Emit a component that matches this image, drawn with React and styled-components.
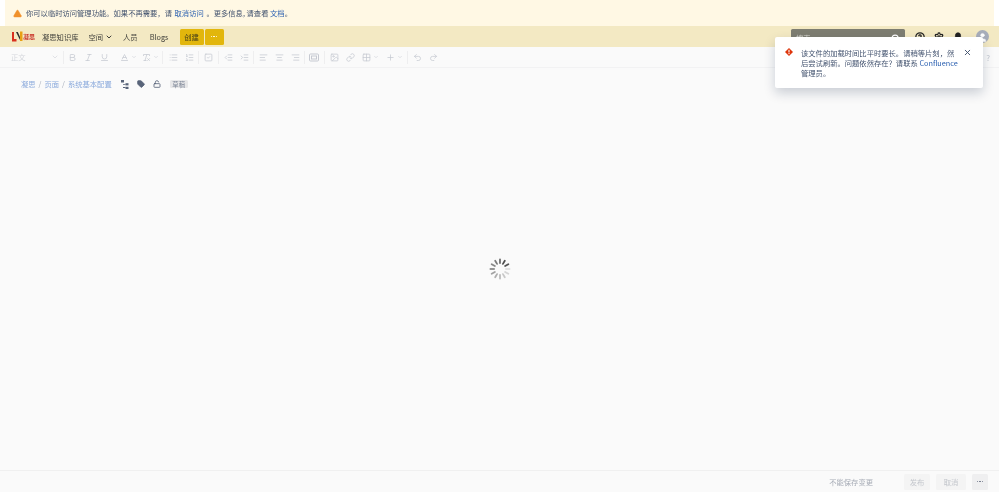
import React from 'react'
import styled, { createGlobalStyle } from 'styled-components'
import {
  AlertTriangle, Bold, Italic, Underline, ChevronDown, List, ListOrdered, SquareCheck,
  IndentDecrease, IndentIncrease, AlignLeft, AlignCenter, AlignRight, Image, Baseline,
  RemoveFormatting, Link as LinkIcon, Grid2x2, Plus, Undo2, Redo2, Search, CircleHelp,
  Settings, Bell, X, Tag, LockOpen, User
} from 'lucide-react'

const FONT = '"Noto Sans CJK SC", "Liberation Sans", sans-serif'

const GlobalStyle = createGlobalStyle`
  html, body { margin: 0; padding: 0; height: 100%; background: #fff; }
  #root { height: 100%; }
  * { box-sizing: border-box; }
`

const Page = styled.div`
  position: relative;
  display: flex;
  flex-direction: column;
  height: 492px;
  overflow: hidden;
  font-family: ${FONT};
  font-size: 7.3px;
  color: #42526e;
  background: #fafafa;
  filter: blur(0.3px);
`

const Banner = styled.div`
  display: flex;
  align-items: center;
  flex: none;
  height: 26px;
  padding-left: 8px;
  margin: 0 5px;
  background: #fff8e4;
  color: #42526e;
  box-shadow: -5px 0 0 #fff, 5px 0 0 #fff;

  svg { margin-right: 4px; }
`

const Link = styled.a`
  color: #2a5fb0;
  margin: ${props => props.$spaced ? '0 1px' : '0'};
`

const Nav = styled.div`
  display: flex;
  align-items: center;
  flex: none;
  height: 21px;
  padding: 0 10px 0 12px;
  background: #f3e9c3;
  color: #3f3f3a;
`

const Logo = styled.div`
  display: flex;
  align-items: center;
  width: 30px;
  color: #c9342a;
  font-size: 6px;
  font-weight: 700;
  gap: 0;
`

const NavItem = styled.span`
  display: flex;
  align-items: center;
  gap: 2px;
  margin-right: ${props => props.$gap}px;
`

const NavButton = styled.div`
  display: flex;
  align-items: center;
  justify-content: center;
  height: 16px;
  width: ${props => props.$w}px;
  margin-right: 1px;
  background: #e2b60c;
  border-radius: 1.5px;
  color: #3f3a1a;
  font-size: 7.3px;
`

const Dots = styled.span`
  display: flex;
  gap: 1px;

  i {
    width: 1.5px;
    height: 1.5px;
    border-radius: 50%;
    background: ${props => props.$color};
  }
`

const NavRight = styled.div`
  display: flex;
  align-items: center;
  margin-left: auto;
`

const SearchBox = styled.div`
  display: flex;
  align-items: center;
  justify-content: space-between;
  width: 114px;
  height: 18px;
  margin-top: 3px;
  padding: 0 5px;
  background: #7d7d71;
  border-radius: 1.5px 1.5px 0 0;
  color: #d8d8d0;
  margin-right: 9px;
`

const NavIcon = styled.span`
  display: flex;
  justify-content: center;
  width: 12px;
  margin-right: ${props => props.$gap}px;
  color: #222;
`

const Avatar = styled.span`
  display: flex;
  align-items: flex-end;
  justify-content: center;
  width: 13px;
  height: 13px;
  border-radius: 50%;
  background: #a7adba;
  overflow: hidden;
  color: #fff;
`

const Toolbar = styled.div`
  display: flex;
  align-items: center;
  flex: none;
  height: 21px;
  padding: 0 9px 0 11px;
  background: #fafafa;
  border-bottom: 1px solid #f2f2f3;
  color: #c6c9d1;
`

const StyleSelect = styled.div`
  display: flex;
  align-items: center;
  justify-content: space-between;
  width: 52px;
  padding-right: 4px;
  color: #d5d7dc;
`

const Divider = styled.span`
  flex: none;
  width: 1px;
  height: 13px;
  margin: 0 ${props => props.$gap ?? 1.5}px;
  background: #eeeeef;
`

const ToolButton = styled.span`
  display: flex;
  align-items: center;
  justify-content: ${props => props.$wide ? 'flex-start' : 'center'};
  flex: none;
  width: ${props => props.$wide ? props.$wide : 16}px;
  padding-left: ${props => props.$wide ? 4 : 0}px;
  gap: 2px;
`

const Spacer = styled.span`
  flex: none;
  width: ${props => props.$w}px;
`

const HelpMark = styled.span`
  margin-left: auto;
  color: #c3c7d0;
  font-size: 8px;
`

const Content = styled.div`
  flex: 1;
  display: flex;
  flex-direction: column;
  background: #fafafa;
`

const Breadcrumbs = styled.div`
  display: flex;
  align-items: center;
  height: 12px;
  margin: 10px 0 0 21px;
  color: #8aa9dc;
`

const Sep = styled.span`
  margin: 0 3px;
  color: #a9b0bd;
`

const CrumbIcon = styled.span`
  display: flex;
  justify-content: center;
  width: 16px;
  color: #596479;
  margin-left: ${props => props.$first ? 5 : 0}px;
`

const Lozenge = styled.span`
  display: flex;
  align-items: center;
  justify-content: center;
  width: 18px;
  height: 8px;
  margin-left: 5px;
  background: #e7e7e8;
  border-radius: 1.5px;
  color: #7c8596;
  font-size: 6.4px;
`

const SpinnerArea = styled.div`
  flex: 1;
  display: flex;
  align-items: center;
  justify-content: center;
  padding-bottom: 23px;
`

const Footer = styled.div`
  display: flex;
  align-items: center;
  flex: none;
  height: 22px;
  padding: 0 11px 0 0;
  justify-content: flex-end;
  background: #fafafa;
  border-top: 1px solid #f0f0f0;
  color: #a8adb7;
`

const Status = styled.span`
  margin-right: 31px;
`

const FooterButton = styled.span`
  display: flex;
  align-items: center;
  justify-content: center;
  width: ${props => props.$w}px;
  height: 16px;
  margin-left: ${props => props.$gap}px;
  background: ${props => props.$dark ? '#efeff0' : '#f4f4f4'};
  border-radius: 1.5px;
  color: #c3c6cc;
`

const Flag = styled.div`
  position: absolute;
  top: 37px;
  left: 775px;
  display: flex;
  width: 208px;
  height: 51px;
  padding: 10px 10px 0 10px;
  background: #fff;
  border-radius: 2px;
  box-shadow: 0 5px 12px rgba(9, 30, 66, 0.2);
  line-height: 10.3px;
  color: #42526e;
`

const FlagIcon = styled.span`
  flex: none;
  width: 16px;
`

const FlagText = styled.div`
  flex: 1;
  padding-top: 0.5px;
`

const FlagClose = styled.span`
  flex: none;
  width: 10px;
  margin: 1px 0 0 5px;
  color: #42526e;
`

const tools = {
  size: 9,
  strokeWidth: 2
}

function Spinner() {
  const bars = Array.from({ length: 12 }, (_, i) => i)
  return (
    <svg width="22" height="22" viewBox="-11 -11 22 22">
      {bars.map(i => (
        <rect
          key={i}
          x="-0.9"
          y="-10.5"
          width="1.8"
          height="5.5"
          rx="0.9"
          fill="#333"
          opacity={0.12 + ((i + 9) % 12) * 0.065 + (((i + 9) % 12) === 10 ? 0.1 : 0)}
          transform={`rotate(${i * 30})`}
        />
      ))}
    </svg>
  )
}

function LogoMark() {
  return (
    <svg width="11" height="11" viewBox="0 0 11 11">
      <path d="M0 1h2v7h2.5v2.5H0z" fill="#d9301f" />
      <path d="M8 0.5h2.5v9.5H8z" fill="#e8a013" />
      <path d="M4 1h1.8l2.2 5v3z" fill="#2b2b2b" />
    </svg>
  )
}

function FlagErrorIcon() {
  return (
    <svg width="8" height="8" viewBox="0 0 10 10" style={{ marginTop: 1 }}>
      <path d="M5 0l5 5-5 5-5-5z" fill="#de350b" />
      <rect x="4.3" y="2.2" width="1.4" height="3.4" fill="#fff" />
      <rect x="4.3" y="6.3" width="1.4" height="1.4" fill="#fff" />
    </svg>
  )
}

function LayoutIcon() {
  return (
    <svg width="10" height="9" viewBox="0 0 10 9" fill="none" stroke="currentColor" strokeWidth="1">
      <rect x="0.5" y="1" width="9" height="7" rx="1" />
      <rect x="2.5" y="3" width="5" height="3" />
    </svg>
  )
}

function TreeIcon() {
  return (
    <svg width="8" height="9" viewBox="0 0 8 9" fill="#596479">
      <rect x="0" y="0" width="3" height="2.5" />
      <rect x="4.5" y="3.2" width="3" height="2.2" />
      <rect x="4.5" y="6.8" width="3" height="2.2" />
      <path d="M1 2.5h1v5.5h2.5v-0.9H2V4.8h2.5V3.9H2V2.5z" />
    </svg>
  )
}

export default function App() {
  return (
    <Page>
      <GlobalStyle />
      <Banner>
        <AlertTriangle size={9} fill="#f0912b" color="#f0912b" strokeWidth={1.5} />
        你可以临时访问管理功能。如果不再需要，请
        <Link $spaced>&nbsp;取消访问&nbsp;</Link>
        。更多信息, 请查看&nbsp;
        <Link>文档</Link>。
      </Banner>

      <Nav>
        <Logo>
          <LogoMark />
          <span>凝思</span>
        </Logo>
        <NavItem $gap={10}>凝思知识库</NavItem>
        <NavItem $gap={10}>空间 <ChevronDown size={8} strokeWidth={3} /></NavItem>
        <NavItem $gap={12}>人员</NavItem>
        <NavItem $gap={11}>Blogs</NavItem>
        <NavButton $w={24}>创建</NavButton>
        <NavButton $w={19}><Dots $color="#fff"><i /><i /><i /></Dots></NavButton>
        <NavRight>
          <SearchBox>
            搜索
            <Search size={9} color="#fff" strokeWidth={3} />
          </SearchBox>
          <NavIcon $gap={7}><CircleHelp size={10} strokeWidth={3} /></NavIcon>
          <NavIcon $gap={7}><Settings size={10} strokeWidth={3} /></NavIcon>
          <NavIcon $gap={12}><Bell size={10} fill="#222" /></NavIcon>
          <Avatar><User size={11} fill="#fff" strokeWidth={1} /></Avatar>
        </NavRight>
      </Nav>

      <Toolbar>
        <StyleSelect>正文 <ChevronDown size={8} /></StyleSelect>
        <Divider $gap={0} />
        <ToolButton><Bold {...tools} /></ToolButton>
        <ToolButton><Italic {...tools} /></ToolButton>
        <ToolButton><Underline {...tools} /></ToolButton>
        <Spacer $w={3.5} />
        <ToolButton $wide={22}><Baseline size={9} /><ChevronDown size={6} /></ToolButton>
        <ToolButton $wide={22.5}><RemoveFormatting size={9} /><ChevronDown size={6} /></ToolButton>
        <Divider $gap={2} />
        <ToolButton><List {...tools} /></ToolButton>
        <ToolButton><ListOrdered {...tools} /></ToolButton>
        <Divider $gap={1} />
        <ToolButton><SquareCheck {...tools} /></ToolButton>
        <Divider />
        <ToolButton><IndentDecrease {...tools} /></ToolButton>
        <ToolButton><IndentIncrease {...tools} /></ToolButton>
        <Divider $gap={1} />
        <ToolButton><AlignLeft {...tools} /></ToolButton>
        <ToolButton><AlignCenter {...tools} /></ToolButton>
        <ToolButton><AlignRight {...tools} /></ToolButton>
        <Divider $gap={1} />
        <ToolButton><LayoutIcon /></ToolButton>
        <Divider />
        <ToolButton><Image {...tools} /></ToolButton>
        <ToolButton><LinkIcon {...tools} /></ToolButton>
        <ToolButton $wide={24}><Grid2x2 size={9} /><ChevronDown size={6} /></ToolButton>
        <ToolButton $wide={23}><Plus size={9} /><ChevronDown size={6} /></ToolButton>
        <Divider />
        <ToolButton><Undo2 {...tools} /></ToolButton>
        <ToolButton><Redo2 {...tools} /></ToolButton>
        <HelpMark>?</HelpMark>
      </Toolbar>

      <Content>
        <Breadcrumbs>
          凝思<Sep>/</Sep>页面<Sep>/</Sep>系统基本配置
          <CrumbIcon $first><TreeIcon /></CrumbIcon>
          <CrumbIcon><Tag size={8} strokeWidth={2.5} fill="#596479" /></CrumbIcon>
          <CrumbIcon><LockOpen size={8} strokeWidth={2.5} /></CrumbIcon>
          <Lozenge>草稿</Lozenge>
        </Breadcrumbs>
        <SpinnerArea><Spinner /></SpinnerArea>
      </Content>

      <Footer>
        <Status>不能保存变更</Status>
        <FooterButton $w={26} $gap={0}>发布</FooterButton>
        <FooterButton $w={30} $gap={6}>取消</FooterButton>
        <FooterButton $w={16} $gap={6} $dark><Dots $color="#6b7385"><i /><i /><i /></Dots></FooterButton>
      </Footer>

      <Flag>
        <FlagIcon><FlagErrorIcon /></FlagIcon>
        <FlagText>
          该文件的加载时间比平时要长。请稍等片刻，然后尝试刷新。问题依然存在？请联系 <Link>Confluence</Link> 管理员。
        </FlagText>
        <FlagClose><X size={9} strokeWidth={2.5} /></FlagClose>
      </Flag>
    </Page>
  )
}
